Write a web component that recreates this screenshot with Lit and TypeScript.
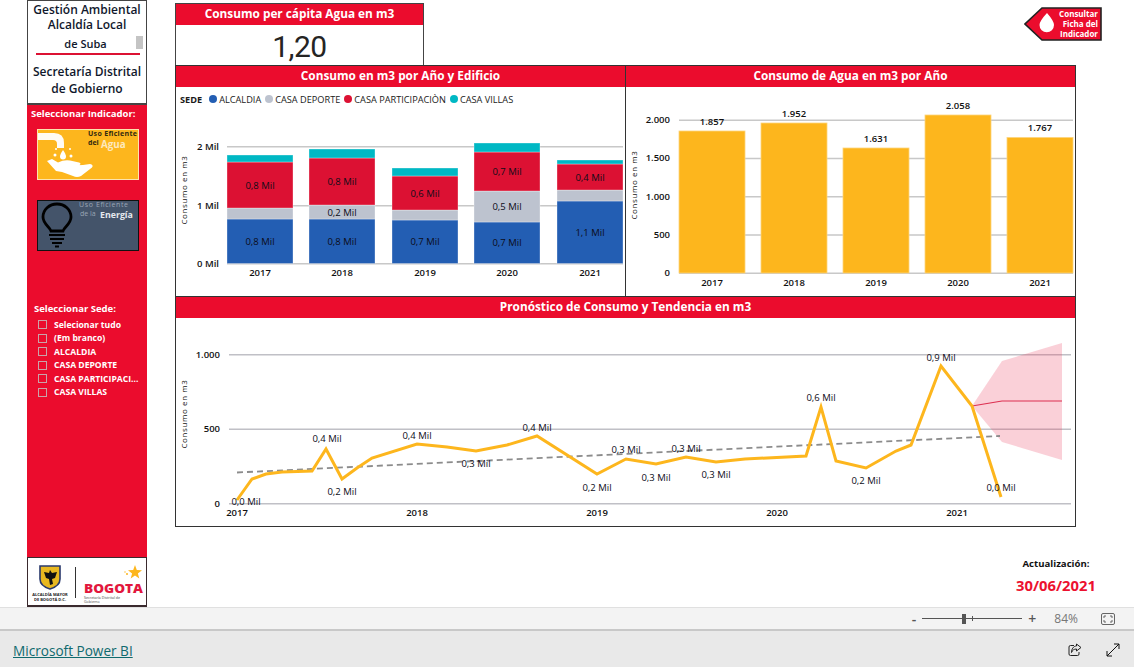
import { LitElement, css, html, svg } from "lit";
import { customElement } from "lit/decorators.js";

const years = ["2017", "2018", "2019", "2020", "2021"];

// tops of each stacked segment, page pixels
const stacks = [
  { x: 227, tops: [219, 208, 162, 155], labels: ["0,8 Mil", "", "0,8 Mil"] },
  { x: 309, tops: [219, 205, 158, 149], labels: ["0,8 Mil", "0,2 Mil", "0,8 Mil"] },
  { x: 392, tops: [220, 210, 176, 168], labels: ["0,7 Mil", "", "0,6 Mil"] },
  { x: 474, tops: [222, 191, 152, 143], labels: ["0,7 Mil", "0,5 Mil", "0,7 Mil"] },
  { x: 557, tops: [201, 190, 164, 160], labels: ["1,1 Mil", "", "0,4 Mil"] },
];
const stackColors = ["#235eb3", "#bdc3cf", "#dc1133", "#00b8c4"];

const waterBars = [
  { x: 679, top: 131, label: "1.857", ly: 121 },
  { x: 761, top: 123, label: "1.952", ly: 113.5 },
  { x: 843, top: 148, label: "1.631", ly: 138 },
  { x: 925, top: 115, label: "2.058", ly: 105.5 },
  { x: 1007, top: 137.5, label: "1.767", ly: 127.5 },
];

const line =
  "237,500 252,479 266,474 282,472 312,471 326,449 342,479 357,468 372,458 417,444 447,447 476,451 507,445 537,436 597,474 626,459 656,464 686,457 716,462 745,459 806,456 821,407 836,461 866,468 896,451 911,445 941,366 972,406 1001,497";

const lineLabels: [number, number, string][] = [
  [246, 501, "0,0 Mil"],
  [327, 438, "0,4 Mil"],
  [342, 491, "0,2 Mil"],
  [417, 435, "0,4 Mil"],
  [476, 463, "0,3 Mil"],
  [537, 427, "0,4 Mil"],
  [597, 487, "0,2 Mil"],
  [626, 449, "0,3 Mil"],
  [656, 477, "0,3 Mil"],
  [686, 448, "0,3 Mil"],
  [716, 474, "0,3 Mil"],
  [821, 397, "0,6 Mil"],
  [866, 480, "0,2 Mil"],
  [941, 357, "0,9 Mil"],
  [1001, 487, "0,0 Mil"],
];

const sedes = [
  "Selecionar tudo",
  "(Em branco)",
  "ALCALDIA",
  "CASA DEPORTE",
  "CASA PARTICIPACI...",
  "CASA VILLAS",
];

const legend = [
  ["ALCALDIA", "#235eb3"],
  ["CASA DEPORTE", "#bdc3cf"],
  ["CASA PARTICIPACIÒN", "#dc1133"],
  ["CASA VILLAS", "#00b8c4"],
];

@customElement("app-root")
export class AppRoot extends LitElement {
  static styles = css`
    :host {
      display: flex;
      flex-direction: column;
      height: 667px;
      overflow: hidden;
      background: #fff;
      font-family: "Open Sans", "Noto Sans", sans-serif;
      color: #111;
    }

    * {
      box-sizing: border-box;
    }

    svg {
      display: block;
    }

    svg text {
      font-family: "Open Sans", "Noto Sans", sans-serif;
    }

    .report {
      display: flex;
      height: 607px;
      padding-left: 27px;
    }

    .sidebar {
      display: flex;
      flex-direction: column;
      width: 120px;
      background: #eb0c2d;
    }

    .brand {
      position: relative;
      height: 105px;
      border: 1px solid #444;
      border-bottom-width: 2px;
      background: #fff;
      color: #10182c;
      font-size: 12px;
      font-weight: 600;
      line-height: 15px;
      text-align: center;
    }

    .brand p {
      margin: 0;
    }

    .brand .office {
      padding-top: 1px;
    }

    .brand .locality {
      margin: 4px 6px 0 8px;
      border-bottom: 2px solid #dc1133;
      padding: 0 5px 2px 0;
      font-size: 11px;
    }

    .brand .gov {
      margin-top: 8px;
      line-height: 17px;
    }

    .scroll {
      position: absolute;
      top: 35px;
      left: 108px;
      width: 7px;
      height: 13px;
      background: #c4c4c4;
    }

    .side-label {
      margin: 0;
      color: #fff;
      font-size: 9.5px;
      font-weight: 700;
      line-height: 14px;
    }

    .indicator-label {
      margin: 2px 0 8px 4px;
    }

    .tile {
      width: 102px;
      height: 51px;
      margin-left: 10px;
    }

    .tile + .tile {
      margin-top: 20px;
    }

    .sede-label {
      margin: 51px 0 2px 7px;
    }

    .sedes {
      display: grid;
      grid-auto-rows: 13.5px;
      margin: 0;
      padding: 0 0 0 11px;
      list-style: none;
    }

    .sedes li {
      display: flex;
      align-items: center;
      gap: 7px;
      color: #fff;
      font-size: 8.6px;
      font-weight: 700;
      white-space: nowrap;
    }

    .check {
      width: 9px;
      height: 9px;
      flex: none;
      border: 1px solid #c9a3a9;
    }

    .logo {
      height: 50px;
      margin-top: auto;
      border: 1px solid #3a2a2e;
      border-bottom-width: 2px;
      background: #fff;
    }

    .main {
      display: flex;
      flex-direction: column;
      width: 927px;
      margin-left: 28px;
    }

    .top {
      display: flex;
      justify-content: space-between;
      align-items: flex-start;
      height: 65px;
      padding-top: 3px;
    }

    .kpi {
      width: 249px;
      height: 63px;
      border: 1px solid #444;
      border-bottom: 0;
    }

    .kpi .value {
      height: 41px;
      color: #252423;
      font-family: Roboto, sans-serif;
      font-size: 30px;
      line-height: 44px;
      letter-spacing: -0.5px;
      text-align: center;
    }

    .flag {
      margin-top: 4px;
    }

    .head {
      height: 21px;
      background: #eb0c2d;
      color: #fff;
      font-size: 11.8px;
      font-weight: 700;
      line-height: 18px;
      text-align: center;
    }

    .charts {
      display: flex;
      width: 901px;
      height: 232px;
    }

    .panel {
      border: 1px solid #333;
      background: #fff;
    }

    .charts .panel {
      width: 451px;
    }

    .charts .panel + .panel {
      margin-left: -1px;
    }

    .legend {
      display: flex;
      align-items: center;
      height: 22px;
      padding: 2px 0 0 4px;
      font-size: 9.2px;
      color: #1a1a1a;
      white-space: nowrap;
    }

    .legend b {
      margin-right: 7px;
    }

    .legend span {
      display: flex;
      align-items: center;
      gap: 2px;
      margin-right: 4px;
    }

    .legend i {
      width: 8px;
      height: 8px;
      border-radius: 50%;
    }

    .forecast {
      width: 901px;
      height: 231px;
      margin-top: -1px;
    }

    .update {
      align-self: flex-start;
      width: 80px;
      margin: 29px 0 0 841px;
      text-align: center;
      white-space: nowrap;
    }

    .update p {
      margin: 0;
    }

    .update .caption {
      font-size: 9.6px;
      font-weight: 700;
      line-height: 15px;
    }

    .update .date {
      margin-top: 4px;
      color: #ec112f;
      font-size: 14.8px;
      font-weight: 700;
      line-height: 20px;
    }

    .zoombar {
      display: flex;
      align-items: center;
      justify-content: flex-end;
      height: 24px;
      border-top: 1px solid #e0e0e0;
      border-bottom: 2px solid #c8c8c8;
      background: #f3f3f3;
      color: #555;
    }

    .zoom-pct {
      margin: 0 23px 0 18px;
      color: #777;
      font-size: 12px;
    }

    .sign {
      font-size: 14px;
      font-weight: 600;
      line-height: 14px;
    }

    .slider {
      position: relative;
      width: 100px;
      height: 10px;
      margin: 0 6px;
    }

    .slider::before {
      content: "";
      position: absolute;
      top: 4px;
      left: 0;
      right: 0;
      height: 1px;
      background: #555;
    }

    .thumb {
      position: absolute;
      top: 0;
      left: 40px;
      width: 4px;
      height: 10px;
      background: #555;
    }

    .tick {
      position: absolute;
      top: 2px;
      left: 50px;
      width: 1px;
      height: 5px;
      background: #555;
    }

    .fit {
      margin-right: 19px;
    }

    .footer {
      display: flex;
      align-items: center;
      flex: 1;
      padding: 2px 13px 0;
      background: #e9e9e9;
    }

    .footer a {
      color: #0f6a6e;
      font-size: 13.6px;
      text-decoration: underline;
    }

    .footer .actions {
      display: flex;
      gap: 24px;
      margin-left: auto;
      margin-right: 1px;
    }
  `;

  private tileWater() {
    return html`<svg class="tile" width="102" height="51" viewBox="0 0 102 51">
      <rect x=".5" y=".5" width="101" height="50" fill="#fdb61d" stroke="#fde3ad" />
      <path d="M1 4h16q10 0 10 10v5h-7v-4q0-4-4-4H1z" fill="#fff" fill-opacity=".95" />
      <path d="M26 21q3 4 3 6.500a3 3 0 0 1-6 0q0-2.500 3-6.500z" fill="#fff" />
      <circle cx="18" cy="26" r="1.500" fill="#fff" />
      <circle cx="34" cy="27" r="1.500" fill="#fff" />
      <circle cx="19" cy="20" r="1" fill="#fff" />
      <circle cx="33" cy="20" r="1" fill="#fff" />
      <path
        d="M10 32l5-2 6 3.500q6-3 12-2l9 2q3 1 0 3h-8l12-.500 7-1q4 1 2 3.500l-11 8.500q-4 2-8 0l-11-4-6-1z"
        fill="#fff"
      />
      <text x="51" y="7" font-size="7" font-weight="700" fill="#332a10" textLength="49">Uso Eficiente</text>
      <text x="51" y="15.500" font-size="7" font-weight="700" fill="#332a10">del</text>
      <text x="64" y="19" font-size="9.800" font-weight="700" fill="#fde9bd">Agua</text>
    </svg>`;
  }

  private tileEnergy() {
    return html`<svg class="tile" width="102" height="51" viewBox="0 0 102 51">
      <rect x=".5" y=".5" width="101" height="50" fill="#44546a" stroke="#111" />
      <path
        d="M14 31c-1-4-8-7-8-14a14 13 0 0 1 28 0c0 7-7 10-8 14z"
        fill="none"
        stroke="#000"
        stroke-width="2.800"
      />
      <path d="M12 35h16M13 39h14M15 43h10M18 46.500h4" stroke="#000" stroke-width="2" />
      <text x="42" y="7" font-size="7" fill="#9aa5b5" textLength="49">Uso Eficiente</text>
      <text x="43" y="16" font-size="7" fill="#9aa5b5">de la</text>
      <text x="63" y="17.500" font-size="8.800" font-weight="700" fill="#e4e8ee">Energía</text>
    </svg>`;
  }

  private logo() {
    return html`<svg width="118" height="47" viewBox="28 558 118 47">
      <path d="M40 566h20v13q0 7-10 10-10-3-10-10z" fill="#e8b820" stroke="#28386c" stroke-width="1.600" />
      <path
        d="M50 570l2 3 5-1-2 6-3 1 1 5-3 1-1-6-3-1-2-6 5 1z"
        fill="#111"
      />
      <text x="50" y="596" font-size="4" font-weight="700" text-anchor="middle" fill="#222">ALCALDÍA MAYOR</text>
      <text x="50" y="600.500" font-size="4" font-weight="700" text-anchor="middle" fill="#222">DE BOGOTÁ D.C.</text>
      <rect x="75" y="567" width="1" height="31" fill="#333" />
      <text x="84" y="592.500" font-size="12" font-weight="800" fill="#e2173d" textLength="59" lengthAdjust="spacingAndGlyphs">BOGOTA</text>
      <path
        d="M135 565l1.800 5 5.200.200-4.100 3.200 1.400 5-4.300-2.900-4.300 2.900 1.400-5-4.100-3.200 5.200-.200z"
        fill="#fdb61d"
      />
      <circle cx="127" cy="574" r="1" fill="#fdb61d" />
      <circle cx="125" cy="572" r=".7" fill="#fdb61d" />
      <text x="84" y="599" font-size="3.600" fill="#444">Secretaría Distrital de</text>
      <text x="84" y="602.800" font-size="3.600" fill="#444">Gobierno</text>
    </svg>`;
  }

  private flag() {
    return html`<svg class="flag" width="78" height="34" viewBox="1024 7 78 34">
      <path d="M1042 8h59v32h-59l-17-16z" fill="#eb0c2d" stroke="#222" stroke-width="1.600" />
      <path d="M1047 13q7 8 7 12a7.200 7.200 0 0 1-14.500 0q0-4 7.500-12z" fill="#fff" />
      ${["Consultar", "Ficha del", "Indicador"].map(
        (t, i) =>
          svg`<text x="1098" y=${17 + i * 10} font-size="8" font-weight="700" fill="#fff" text-anchor="end">${t}</text>`,
      )}
    </svg>`;
  }

  private axisTitle(x: number, y: number) {
    return svg`<text transform="translate(${x} ${y}) rotate(-90)" font-size="8" letter-spacing=".6" text-anchor="middle" fill="#111">Consumo en m3</text>`;
  }

  private stackedChart() {
    const base = 263.5;
    return html`<svg width="449" height="187" viewBox="176 109 449 187">
      ${[146.5, 205.5, 263.5].map(
        (y, i) => svg`
          <rect x="227" y=${y - 0.5} width="396" height="1.500" fill="#c8c8c8" />
          <text x="219" y=${y + 3} font-size="9.500" font-weight="600" text-anchor="end" fill="#111">${2 - i} Mil</text>`,
      )}
      ${this.axisTitle(187, 190)}
      ${stacks.map((s, i) => {
        const bottoms = [base, ...s.tops];
        return svg`
          ${s.tops.map(
            (top, k) =>
              svg`<rect x=${s.x} y=${top} width="66" height=${bottoms[k] - top} fill=${stackColors[k]} stroke="#fff" stroke-opacity=".4" stroke-width=".8" />`,
          )}
          ${s.labels.map((label, k) =>
            label
              ? svg`<text x=${s.x + 33} y=${(bottoms[k] + s.tops[k]) / 2 + 3.5} font-size="9.500" font-weight="500" text-anchor="middle" fill="#0c0c18">${label}</text>`
              : null,
          )}
          <text x=${s.x + 33} y="276" font-size="9.500" font-weight="600" text-anchor="middle" fill="#111">${years[i]}</text>`;
      })}
    </svg>`;
  }

  private waterChart() {
    const ticks = ["2.000", "1.500", "1.000", "500", "0"];
    return html`<svg width="449" height="209" viewBox="626 87 449 209">
      ${ticks.map((t, i) => {
        const y = 120 + i * 38.25;
        return svg`
          <rect x="679" y=${y - 0.5} width="394" height="1.500" fill="#c8c8c8" />
          <text x="670" y=${y + 3} font-size="9.500" font-weight="600" text-anchor="end" fill="#111">${t}</text>`;
      })}
      ${this.axisTitle(637, 185)}
      ${waterBars.map(
        (b, i) => svg`
          <rect x=${b.x} y=${b.top} width="66" height=${273 - b.top} fill="#fdb61d" stroke="#fdd47c" stroke-width=".8" />
          <text x=${b.x + 33} y=${b.ly + 3.5} font-size="9.500" font-weight="600" text-anchor="middle" fill="#111">${b.label}</text>
          <text x=${b.x + 33} y="286" font-size="9.500" font-weight="600" text-anchor="middle" fill="#111">${years[i]}</text>`,
      )}
    </svg>`;
  }

  private forecastChart() {
    const ticks: [number, string][] = [
      [354.5, "1.000"],
      [429, "500"],
      [503.5, "0"],
    ];
    return html`<svg width="899" height="208" viewBox="176 318 899 208">
      ${ticks.map(
        ([y, t]) => svg`
          <rect x="229" y=${y - 0.5} width="842" height="1.500" fill="#c0c0c6" />
          <text x="220" y=${y + 3} font-size="9.500" font-weight="600" text-anchor="end" fill="#111">${t}</text>`,
      )}
      ${this.axisTitle(187, 414)}
      <polygon
        points="972,406 1002,361 1062,343 1062,460 1002,442"
        fill="#eb3a5a"
        fill-opacity=".24"
      />
      <polyline
        points="972,406 1002,401 1062,401"
        fill="none"
        stroke="#dc2f50"
        stroke-width="1.200"
      />
      <line
        x1="237"
        y1="472.500"
        x2="1000"
        y2="436"
        stroke="#8c8c8c"
        stroke-width="1.800"
        stroke-dasharray="6 4"
      />
      <polyline
        points=${line}
        fill="none"
        stroke="#fdb61d"
        stroke-width="3"
        stroke-linejoin="miter"
      />
      ${lineLabels.map(
        ([x, y, t]) =>
          svg`<text x=${x} y=${y + 3.5} font-size="9.500" font-weight="500" text-anchor="middle" fill="#0c0c18">${t}</text>`,
      )}
      ${years.map(
        (t, i) =>
          svg`<text x=${237 + i * 180} y="515.500" font-size="9.500" font-weight="600" text-anchor="middle" fill="#111">${t}</text>`,
      )}
    </svg>`;
  }

  render() {
    return html`
      <div class="report">
        <aside class="sidebar">
          <div class="brand">
            <p class="office">Gestión Ambiental<br />Alcaldía Local</p>
            <p class="locality">de Suba</p>
            <p class="gov">Secretaría Distrital<br />de Gobierno</p>
            <div class="scroll"></div>
          </div>
          <p class="side-label indicator-label">Seleccionar Indicador:</p>
          ${this.tileWater()} ${this.tileEnergy()}
          <p class="side-label sede-label">Seleccionar Sede:</p>
          <ul class="sedes">
            ${sedes.map((s) => html`<li><span class="check"></span>${s}</li>`)}
          </ul>
          <div class="logo">${this.logo()}</div>
        </aside>
        <main class="main">
          <div class="top">
            <section class="kpi">
              <div class="head">Consumo per cápita Agua en m3</div>
              <div class="value">1,20</div>
            </section>
            ${this.flag()}
          </div>
          <div class="charts">
            <section class="panel">
              <div class="head">Consumo en m3 por Año y Edificio</div>
              <div class="legend">
                <b>SEDE</b>
                ${legend.map(
                  ([name, color]) =>
                    html`<span><i style="background:${color}"></i>${name}</span>`,
                )}
              </div>
              ${this.stackedChart()}
            </section>
            <section class="panel">
              <div class="head">Consumo de Agua en m3 por Año</div>
              ${this.waterChart()}
            </section>
          </div>
          <section class="panel forecast">
            <div class="head">Pronóstico de Consumo y Tendencia en m3</div>
            ${this.forecastChart()}
          </section>
          <div class="update">
            <p class="caption">Actualización:</p>
            <p class="date">30/06/2021</p>
          </div>
        </main>
      </div>
      <div class="zoombar">
        <span class="sign">-</span>
        <div class="slider"><span class="thumb"></span><span class="tick"></span></div>
        <span class="sign">+</span>
        <span class="zoom-pct">84%</span>
        <svg class="fit" width="14" height="12" viewBox="0 0 14 12" fill="none" stroke="#666">
          <rect x=".5" y=".5" width="13" height="11" rx="1.500" />
          <path d="M3 5V3h2M9 3h2v2M11 7v2H9M5 9H3V7" />
        </svg>
      </div>
      <div class="footer">
        <a>Microsoft Power BI</a>
        <div class="actions">
          <svg width="14" height="14" viewBox="0 0 14 14" fill="none" stroke="#222">
            <path d="M6 2.500H2.500a1.500 1.500 0 0 0-1.500 1.500v7a1.500 1.500 0 0 0 1.500 1.500h7a1.500 1.500 0 0 0 1.500-1.500V9" />
            <path d="M8.500 1l4.500 3.500-4.500 3.500V6C6 6 4.500 7 3.500 9.500 3.500 6 5.500 3 8.500 3z" />
          </svg>
          <svg width="14" height="14" viewBox="0 0 14 14" fill="none" stroke="#111">
            <path d="M1 13L13 1M8 1h5v5M1 8v5h5" />
          </svg>
        </div>
      </div>
    `;
  }
}
